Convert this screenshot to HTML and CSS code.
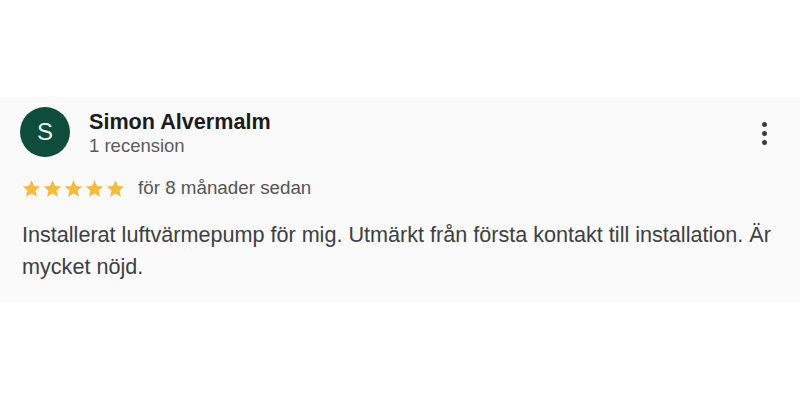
FILE: index.html
```html
<!DOCTYPE html>
<html lang="sv">
<head>
<meta charset="utf-8">
<link rel="stylesheet" href="styles.css">
</head>
<body>
<div class="card">
  <div class="header">
    <div class="avatar">S</div>
    <div class="who">
      <div class="name">Simon Alvermalm</div>
      <div class="count">1 recension</div>
    </div>
    <div class="more" aria-label="Fler alternativ">
      <span></span><span></span><span></span>
    </div>
  </div>
  <div class="meta">
    <div class="stars">
      <svg viewBox="0 0 24 24" class="star"><path d="M12 2.5l2.9 6.6 7.1.6-5.4 4.7 1.6 7-6.2-3.7-6.2 3.7 1.6-7L2 9.7l7.1-.6z"/></svg>
      <svg viewBox="0 0 24 24" class="star"><path d="M12 2.5l2.9 6.6 7.1.6-5.4 4.7 1.6 7-6.2-3.7-6.2 3.7 1.6-7L2 9.7l7.1-.6z"/></svg>
      <svg viewBox="0 0 24 24" class="star"><path d="M12 2.5l2.9 6.6 7.1.6-5.4 4.7 1.6 7-6.2-3.7-6.2 3.7 1.6-7L2 9.7l7.1-.6z"/></svg>
      <svg viewBox="0 0 24 24" class="star"><path d="M12 2.5l2.9 6.6 7.1.6-5.4 4.7 1.6 7-6.2-3.7-6.2 3.7 1.6-7L2 9.7l7.1-.6z"/></svg>
      <svg viewBox="0 0 24 24" class="star"><path d="M12 2.5l2.9 6.6 7.1.6-5.4 4.7 1.6 7-6.2-3.7-6.2 3.7 1.6-7L2 9.7l7.1-.6z"/></svg>
    </div>
    <span class="date">för 8 månader sedan</span>
  </div>
  <p class="text">Installerat luftvärmepump för mig. Utmärkt från första kontakt till installation. Är mycket nöjd.</p>
</div>
</body>
</html>
```
FILE: styles.css
```css
html, body {
  margin: 0;
  padding: 0;
  background: #ffffff;
  font-family: "Liberation Sans", Arial, sans-serif;
}
body {
  padding-top: 97px;
}
.card {
  background: #fafafa;
  height: 205px;
  box-sizing: border-box;
  padding: 10px 10px 0 20px;
}
.header {
  display: flex;
  align-items: flex-start;
}
.avatar {
  width: 50px;
  height: 50px;
  border-radius: 50%;
  background: #0e4d3c;
  color: #e8f4ee;
  font-size: 24px;
  display: flex;
  align-items: center;
  justify-content: center;
  flex: none;
}
.who {
  margin-left: 19px;
  padding-top: 3px;
  flex: 1;
}
.name {
  font-weight: bold;
  font-size: 21.6px;
  color: #1b1b1b;
  line-height: 24px;
}
.count {
  font-size: 18.5px;
  color: #5a5a5a;
  line-height: 22px;
  margin-top: 1px;
}
.more {
  display: flex;
  flex-direction: column;
  gap: 4px;
  margin-top: 15px;
  margin-right: 23px;
}
.more span {
  width: 5px;
  height: 5px;
  border-radius: 50%;
  background: #3a3a3a;
}
.meta {
  display: flex;
  align-items: center;
  margin-top: 20px;
  padding-left: 1px;
  height: 22px;
}
.stars {
  display: flex;
  gap: 0;
}
.star {
  width: 21px;
  height: 21px;
  fill: #f6bb3b;
}
.date {
  margin-left: 12px;
  font-size: 18.8px;
  color: #555555;
}
.text {
  margin: 20px 0 0 2px;
  font-size: 21.6px;
  line-height: 32px;
  color: #3c4043;
}
```
